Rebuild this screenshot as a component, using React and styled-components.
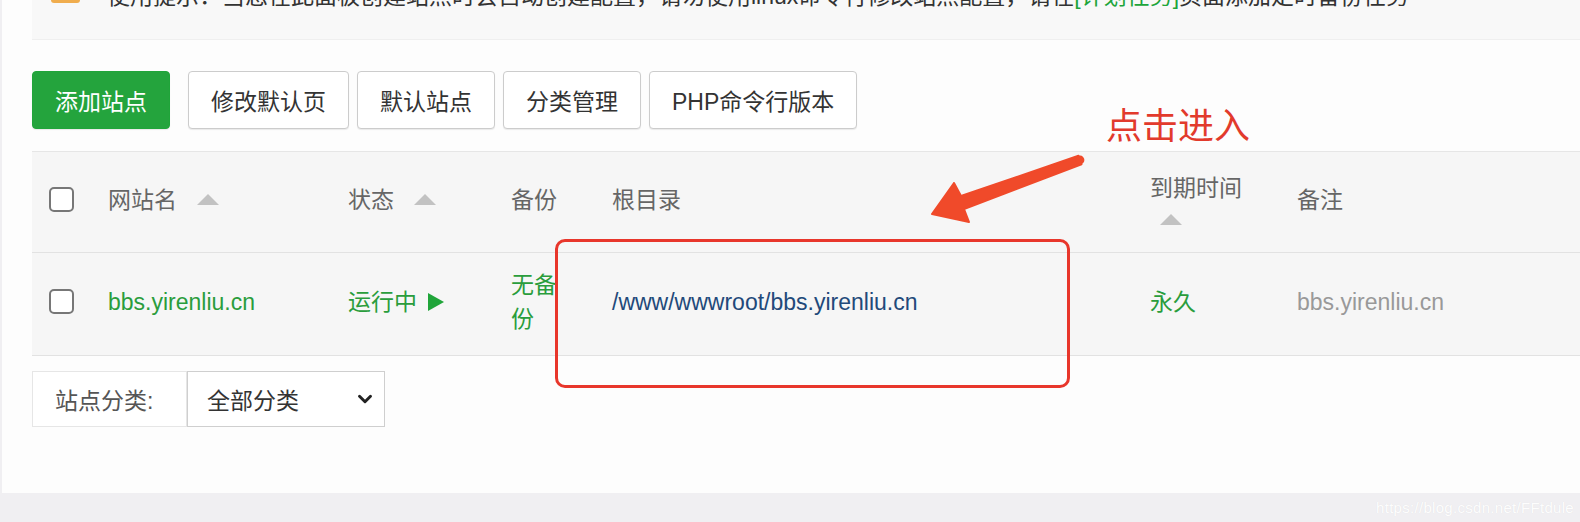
import React from 'react';
import styled, { createGlobalStyle } from 'styled-components';
import { ChevronDown } from 'lucide-react';

const GlobalStyle = createGlobalStyle`
  body {
    margin: 0;
    background: #f0eff2;
    font-family: 'Liberation Sans', 'Noto Sans CJK SC', sans-serif;
  }
`;

const Root = styled.div`
  position: relative;
  width: 1580px;
  height: 522px;
  overflow: hidden;
`;

const Panel = styled.div`
  margin-left: 2px;
  height: 493px;
  padding-left: 30px;
  background: #fdfdfd;
  overflow: hidden;
`;

const Alert = styled.div`
  display: flex;
  align-items: flex-start;
  margin-top: -40px;
  padding: 24px 0 31px 19px;
  background: #f8f8f8;
  border-bottom: 1px solid #efefef;
  font-size: 23px;
  line-height: 24px;
  color: #333;
  white-space: nowrap;
`;

const AlertIcon = styled.span`
  width: 29px;
  height: 19px;
  margin-right: 27px;
  border-radius: 3px;
  background: #f0ad4e;
`;

const Link = styled.span`
  color: #20a53a;
`;

const Toolbar = styled.div`
  display: flex;
  gap: 8px;
  margin-top: 31px;
`;

const Button = styled.button`
  height: 58px;
  padding: 0 22px;
  margin-right: ${(p) => (p.$primary ? '10px' : '0')};
  border: 1px solid ${(p) => (p.$primary ? '#20a53a' : '#ccc')};
  border-radius: 4px;
  background: ${(p) => (p.$primary ? '#24a43d' : '#fff')};
  color: ${(p) => (p.$primary ? '#fff' : '#333')};
  font-family: inherit;
  font-size: 23px;
  box-shadow: 0 1px 1px rgba(0, 0, 0, 0.08);
`;

const Table = styled.div`
  margin-top: 22px;
  background: #f6f6f6;
  border-top: 1px solid #e6e6e6;
`;

const Row = styled.div`
  display: grid;
  grid-template-columns: 61px 240px 163px 101px 538px 147px 1fr;
  height: ${(p) => (p.$head ? '100px' : '102px')};
  border-bottom: 1px solid #e2e2e2;
  font-size: 23px;
  color: #666;
`;

const Cell = styled.div`
  display: flex;
  flex-direction: ${(p) => (p.$stacked ? 'column' : 'row')};
  align-items: ${(p) => (p.$stacked ? 'flex-start' : 'center')};
  justify-content: ${(p) => (p.$stacked ? 'center' : 'flex-start')};
  padding-left: ${(p) => (p.$first ? '17px' : '15px')};
  padding-bottom: 5px;
  color: ${(p) => p.$color || 'inherit'};
  line-height: 26px;
`;

const Check = styled.span`
  width: 21px;
  height: 21px;
  border: 2px solid #777;
  border-radius: 5px;
  background: #fff;
`;

const SortArrow = styled.span`
  width: 0;
  height: 0;
  margin-left: ${(p) => (p.$below ? '10px' : '20px')};
  margin-top: ${(p) => (p.$below ? '13px' : '0')};
  border-left: 11px solid transparent;
  border-right: 11px solid transparent;
  border-bottom: 11px solid #c2c2c2;
`;

const PlayIcon = styled.span`
  width: 0;
  height: 0;
  margin-left: 11px;
  border-top: 9px solid transparent;
  border-bottom: 9px solid transparent;
  border-left: 16px solid #20a53a;
`;

const Wrap = styled.span`
  width: 50px;
  line-height: 34px;
`;

const Filter = styled.div`
  display: flex;
  height: 56px;
  margin-top: 15px;
  font-size: 23px;
`;

const FilterLabel = styled.div`
  display: flex;
  align-items: center;
  width: 155px;
  padding-left: 22px;
  box-sizing: border-box;
  background: #fff;
  border: 1px solid #e6e6e6;
  color: #555;
`;

const Select = styled.div`
  display: flex;
  align-items: center;
  justify-content: space-between;
  width: 198px;
  padding: 0 8px 0 19px;
  box-sizing: border-box;
  background: #fff;
  border: 1px solid #cfcfcf;
  color: #333;
`;

const Footer = styled.div`
  display: flex;
  justify-content: flex-end;
  align-items: center;
  height: 29px;
  padding-right: 6px;
  font-size: 15px;
  letter-spacing: 0.3px;
  color: rgba(255, 255, 255, 0.95);
  text-shadow: 0 0 1px rgba(0, 0, 0, 0.08);
`;

const Highlight = styled.div`
  position: absolute;
  left: 555px;
  top: 239px;
  width: 509px;
  height: 143px;
  border: 3.5px solid #e8362b;
  border-radius: 10px;
`;

const Callout = styled.div`
  position: absolute;
  left: 1106px;
  top: 109px;
  font-size: 36px;
  line-height: 1;
  color: #e23a2c;
`;

const Arrow = styled.svg`
  position: absolute;
  left: 920px;
  top: 145px;
  width: 175px;
  height: 85px;
`;

export default function App() {
  return (
    <Root>
      <GlobalStyle />
      <Panel>
        <Alert>
          <AlertIcon />
          <span>
            使用提示：当您在此面板创建站点时会自动创建配置，请勿使用linux命令行修改站点配置，请在
            <Link>[计划任务]</Link>页面添加定时备份任务
          </span>
        </Alert>
        <Toolbar>
          <Button $primary>添加站点</Button>
          <Button>修改默认页</Button>
          <Button>默认站点</Button>
          <Button>分类管理</Button>
          <Button>PHP命令行版本</Button>
        </Toolbar>
        <Table>
          <Row $head>
            <Cell $first><Check /></Cell>
            <Cell>网站名<SortArrow /></Cell>
            <Cell>状态<SortArrow /></Cell>
            <Cell>备份</Cell>
            <Cell>根目录</Cell>
            <Cell $stacked>到期时间<SortArrow $below /></Cell>
            <Cell>备注</Cell>
          </Row>
          <Row>
            <Cell $first><Check /></Cell>
            <Cell $color="#2a9d3c">bbs.yirenliu.cn</Cell>
            <Cell $color="#2a9d3c">运行中<PlayIcon /></Cell>
            <Cell $color="#2a9d3c"><Wrap>无备份</Wrap></Cell>
            <Cell $color="#22497a">/www/wwwroot/bbs.yirenliu.cn</Cell>
            <Cell $color="#2a9d3c">永久</Cell>
            <Cell $color="#999">bbs.yirenliu.cn</Cell>
          </Row>
        </Table>
        <Filter>
          <FilterLabel>站点分类:</FilterLabel>
          <Select>
            全部分类
            <ChevronDown size={22} strokeWidth={3.2} color="#222" />
          </Select>
        </Filter>
      </Panel>
      <Footer>https://blog.csdn.net/FFtdule</Footer>

      <Highlight />
      <Callout>点击进入</Callout>
      <Arrow viewBox="920 145 175 85">
        <polygon
          points="1078.5,155.8 961,196 954,183 932,214 969,222 964,209 1081.5,164.2"
          fill="#f04a2a"
          stroke="#f04a2a"
          strokeWidth="2"
          strokeLinejoin="round"
        />
        <circle cx="1080" cy="160" r="4.4" fill="#f04a2a" />
      </Arrow>
    </Root>
  );
}
